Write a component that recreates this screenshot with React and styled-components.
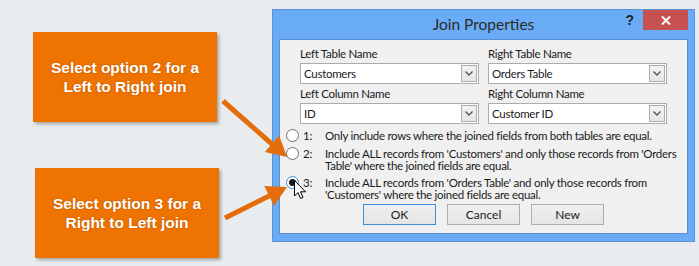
import React from 'react';
import styled, { createGlobalStyle } from 'styled-components';

const GlobalStyle = createGlobalStyle`
  html, body {
    margin: 0;
    padding: 0;
    background: #e9ecef;
  }
`;

const Page = styled.div`
  position: relative;
  display: flex;
  width: 699px;
  height: 266px;
  background: #e9ecef;
  overflow: hidden;
`;

const LeftColumn = styled.div`
  width: 272px;
  display: flex;
  flex-direction: column;
`;

const Callout = styled.div`
  margin-top: ${({ top }) => top}px;
  margin-left: ${({ left }) => left}px;
  width: 184px;
  height: 90px;
  background: #ef7300;
  box-shadow: 2px 2px 3px rgba(0, 0, 0, 0.3);
  display: flex;
  align-items: center;
  justify-content: center;
  text-align: center;
  color: #fff;
  font-family: 'Liberation Sans', Arial, sans-serif;
  font-weight: bold;
  font-size: 15.5px;
  line-height: 19px;
  text-shadow: 0 0 2px rgba(120, 50, 0, 0.5);
`;

const Dialog = styled.div`
  margin-top: 9px;
  width: 423px;
  height: 233px;
  box-sizing: border-box;
  background: #6aabf5;
  border: 1px solid #5b94d6;
  display: flex;
  flex-direction: column;
  font-family: Lato, 'Segoe UI', sans-serif;
  color: #1a1a1a;
`;

const TitleBar = styled.div`
  height: 29px;
  display: grid;
  grid-template-columns: 1fr auto 1fr;
  align-items: start;
`;

const Title = styled.div`
  grid-column: 2;
  padding-top: 4px;
  font-size: 15.5px;
  line-height: 20px;
  color: #2b2b2b;
`;

const Controls = styled.div`
  grid-column: 3;
  display: flex;
  justify-content: flex-end;
  align-items: center;
  padding-right: 6px;
`;

const Help = styled.span`
  font-family: 'Liberation Sans', Arial, sans-serif;
  font-weight: bold;
  font-size: 14px;
  line-height: 20px;
  color: #222;
  margin-right: 9px;
`;

const CloseButton = styled.div`
  width: 45px;
  height: 20px;
  background: #c75050;
  display: flex;
  align-items: center;
  justify-content: center;
`;

const Panel = styled.div`
  flex: 1;
  margin: 0 6px 7px 6px;
  background: #f0f0f0;
  border: 1px solid #5a8fcf;
  padding: 6px 0 0 0;
  font-size: 11.5px;
  letter-spacing: -0.28px;
`;

const Fields = styled.div`
  display: grid;
  grid-template-columns: 179px 179px;
  column-gap: 9px;
  padding-left: 20px;
`;

const Field = styled.div`
  display: flex;
  flex-direction: column;
`;

const Label = styled.div`
  line-height: 16px;
  height: 17px;
`;

const Combo = styled.div`
  height: 21px;
  box-sizing: border-box;
  background: #fff;
  border: 1px solid #acacac;
  display: flex;
  align-items: center;
  padding-left: 3px;
  margin-bottom: 2px;
`;

const ComboText = styled.span`
  flex: 1;
`;

const ComboArrow = styled.div`
  width: 16px;
  height: 17px;
  margin-right: 1px;
  box-sizing: border-box;
  border: 1px solid #adadad;
  background: linear-gradient(#f2f2f2, #e5e5e5);
  display: flex;
  align-items: center;
  justify-content: center;
`;

const Options = styled.div`
  display: flex;
  flex-direction: column;
  gap: 5px;
  padding: 4px 0 0 6px;
`;

const Option = styled.div`
  position: relative;
  display: flex;
  align-items: flex-start;
  line-height: 12px;
  margin-top: ${({ extra }) => extra || 0}px;
`;

const Radio = styled.div`
  width: 13px;
  height: 13px;
  box-sizing: border-box;
  border-radius: 50%;
  border: 1px solid ${({ checked }) => (checked ? '#3c8ee0' : '#707070')};
  background: #fff;
  display: flex;
  align-items: center;
  justify-content: center;
  margin-top: -1px;
  flex-shrink: 0;
`;

const Dot = styled.div`
  width: 7px;
  height: 7px;
  border-radius: 50%;
  background: #1a1a1a;
`;

const OptionNumber = styled.span`
  width: 26px;
  padding-left: 4px;
  box-sizing: border-box;
  flex-shrink: 0;
`;

const OptionText = styled.span`
  width: 358px;
`;

const Cursor = styled.svg`
  position: absolute;
  left: 8px;
  top: 3px;
`;

const Buttons = styled.div`
  display: flex;
  justify-content: center;
  gap: 11px;
  margin-top: 3px;
`;

const Button = styled.div`
  width: 73px;
  height: 21px;
  box-sizing: border-box;
  border: 1px solid ${({ primary }) => (primary ? '#3c8fd6' : '#adadad')};
  background: linear-gradient(#f0f0f0, #e5e5e5);
  display: flex;
  align-items: center;
  justify-content: center;
  font-size: 12px;
  letter-spacing: 0;
`;

const Arrows = styled.svg`
  position: absolute;
  left: 0;
  top: 0;
  pointer-events: none;
`;

const ChevronDown = () => (
  <svg width="8" height="5" viewBox="0 0 8 5">
    <path d="M0.5 0.5 L4 4 L7.5 0.5" fill="none" stroke="#555" strokeWidth="1.4" />
  </svg>
);

const fields = [
  { label: 'Left Table Name', value: 'Customers' },
  { label: 'Right Table Name', value: 'Orders Table' },
  { label: 'Left Column Name', value: 'ID' },
  { label: 'Right Column Name', value: 'Customer ID' },
];

const options = [
  { n: '1:', text: 'Only include rows where the joined fields from both tables are equal.' },
  { n: '2:', text: "Include ALL records from 'Customers' and only those records from 'Orders Table' where the joined fields are equal.", extra: 1 },
  { n: '3:', text: "Include ALL records from 'Orders Table' and only those records from 'Customers' where the joined fields are equal.", checked: true },
];

const App = () => (
  <>
    <GlobalStyle />
    <Page>
      <LeftColumn>
        <Callout top={ 32 } left={ 33 }>
          Select option 2 for a
          <br />
          Left to Right join
        </Callout>
        <Callout top={ 46 } left={ 35 }>
          Select option 3 for a
          <br />
          Right to Left join
        </Callout>
      </LeftColumn>
      <Dialog>
        <TitleBar>
          <Title>Join Properties</Title>
          <Controls>
            <Help>?</Help>
            <CloseButton>
              <svg width="10" height="9" viewBox="0 0 10 9">
                <path d="M1 0.5 L9 8.5 M9 0.5 L1 8.5" stroke="#fff" strokeWidth="2" />
              </svg>
            </CloseButton>
          </Controls>
        </TitleBar>
        <Panel>
          <Fields>
            { fields.map((f) => (
              <Field key={ f.label }>
                <Label>{ f.label }</Label>
                <Combo>
                  <ComboText>{ f.value }</ComboText>
                  <ComboArrow>
                    <ChevronDown />
                  </ComboArrow>
                </Combo>
              </Field>
            )) }
          </Fields>
          <Options>
            { options.map((o) => (
              <Option key={ o.n } extra={ o.extra }>
                <Radio checked={ o.checked }>{ o.checked && <Dot /> }</Radio>
                <OptionNumber>{ o.n }</OptionNumber>
                <OptionText>{ o.text }</OptionText>
                { o.checked && (
                  <Cursor width="13" height="20" viewBox="0 0 13 20">
                    <path
                      d="M0.5 0.5 L0.5 16 L4 12.5 L6.5 18.5 L9 17.5 L6.5 11.8 L11.5 11.8 Z"
                      fill="#fff"
                      stroke="#000"
                      strokeWidth="1"
                      strokeLinejoin="round"
                    />
                  </Cursor>
                ) }
              </Option>
            )) }
          </Options>
          <Buttons>
            <Button primary>OK</Button>
            <Button>Cancel</Button>
            <Button>New</Button>
          </Buttons>
        </Panel>
      </Dialog>
      <Arrows width="699" height="266" viewBox="0 0 699 266">
        <g fill="#e46c0a" stroke="#e46c0a">
          <line x1="223" y1="101" x2="273" y2="145" strokeWidth="5" />
          <polygon points="287,157 264.8,152.1 279.2,135.5" stroke="none" />
          <line x1="225" y1="218" x2="271" y2="195" strokeWidth="5" />
          <polygon points="287,187 274,205.7 264.2,186.1" stroke="none" />
        </g>
      </Arrows>
    </Page>
  </>
);

export default App;
